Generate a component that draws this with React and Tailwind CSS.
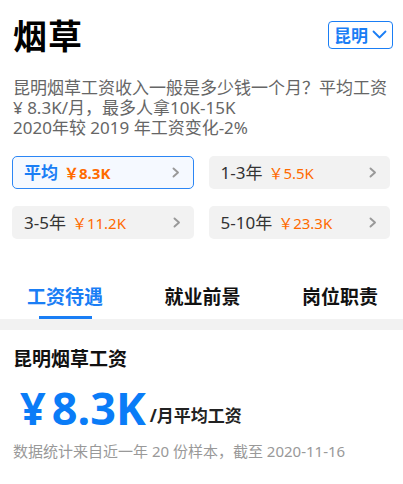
import React from "react";

const font = { fontFamily: '"Noto Sans", "Noto Sans CJK SC", sans-serif' };

function Chevron({ className = "" }) {
  return (
    <svg width="8" height="11" viewBox="0 0 8 11" className={className}>
      <path d="M1.5 1.5 L6 5.5 L1.5 9.5" fill="none" stroke="currentColor" strokeWidth="1.9" strokeLinecap="round" strokeLinejoin="round" />
    </svg>
  );
}

function Card({ label, value, active }) {
  return (
    <div
      className={
        "flex h-[33px] items-center justify-between rounded-[5px] pr-[13px] " +
        (active ? "border border-[#2b86f5] bg-[#f5f9ff] pl-[11px]" : "bg-[#f2f2f2] pl-[12px]")
      }
    >
      <div className="flex items-center gap-[6px]">
        <span className={active ? "text-[17px] font-bold leading-[22px] text-[#1a7ef5]" : "text-[17px] leading-[22px] text-[#333]"}>{label}</span>
        <span className={active ? "text-[15px] font-bold leading-[20px] text-[#ff6a00]" : "text-[15px] leading-[20px] text-[#ff6a00]"}>{value}</span>
      </div>
      <Chevron className="text-[#999]" />
    </div>
  );
}

export default function App() {
  return (
    <div className="w-[403px] h-[484px] overflow-hidden bg-white" style={font}>
      <div className="px-[13px] pt-[14px]">
        <div className="flex items-start justify-between">
          <h1 className="text-[34px] font-bold leading-[44px] text-black tracking-[1px]">烟草</h1>
          <div className="mt-[7px] mr-[-3px] flex h-[28px] items-center gap-[4px] rounded-[4px] border border-[#1a7ef5] px-[5px] text-[#1a7ef5]">
            <span className="text-[17px] font-bold leading-none">昆明</span>
            <svg width="15" height="10" viewBox="0 0 15 10">
              <path d="M1.5 1.5 L7.5 7.5 L13.5 1.5" fill="none" stroke="currentColor" strokeWidth="1.8" strokeLinecap="round" strokeLinejoin="round" />
            </svg>
          </div>
        </div>
        <div className="mt-[20px] flex flex-col text-[17px] leading-[20px] text-[#666]">
          <span>昆明烟草工资收入一般是多少钱一个月？平均工资</span>
          <span>¥ 8.3K/月，最多人拿10K-15K</span>
          <span>2020年较 2019 年工资变化-2%</span>
        </div>
        <div className="mt-[18px] ml-[-1px] grid grid-cols-2 gap-x-[15px] gap-y-[17px]">
          <Card label="平均" value="￥8.3K" active />
          <Card label="1-3年" value="￥5.5K" />
          <Card label="3-5年" value="￥11.2K" />
          <Card label="5-10年" value="￥23.3K" />
        </div>
      </div>
      <div className="mt-[46px] flex justify-between pl-[27px] pr-[25px]">
        <div className="flex flex-col items-center">
          <span className="text-[19px] font-bold leading-[24px] text-[#1a7ef5]">工资待遇</span>
          <div className="mt-[7px] h-[3px] w-[53px] bg-[#1a7ef5]" />
        </div>
        <span className="text-[19px] font-bold leading-[24px] text-[#111]">就业前景</span>
        <span className="text-[19px] font-bold leading-[24px] text-[#111]">岗位职责</span>
      </div>
      <div className="h-[11px] bg-[#f2f2f2]" />
      <div className="px-[13px] pt-[17px]">
        <h2 className="text-[19px] font-bold leading-[24px] text-[#111]">昆明烟草工资</h2>
        <div className="mt-[13px] flex items-end pl-[7px]">
          <span className="text-[45px] font-bold leading-[48px] text-[#0a7cf7]">¥</span>
          <span className="ml-[6px] text-[45px] font-bold leading-[48px] text-[#0a7cf7]">8.3K</span>
          <span className="mb-[5px] ml-[4px] text-[17px] font-bold leading-[22px] text-[#222]">/月平均工资</span>
        </div>
        <p className="mt-[9px] text-[15px] leading-[20px] text-[#999]">数据统计来自近一年 20 份样本，截至 2020-11-16</p>
      </div>
    </div>
  );
}
